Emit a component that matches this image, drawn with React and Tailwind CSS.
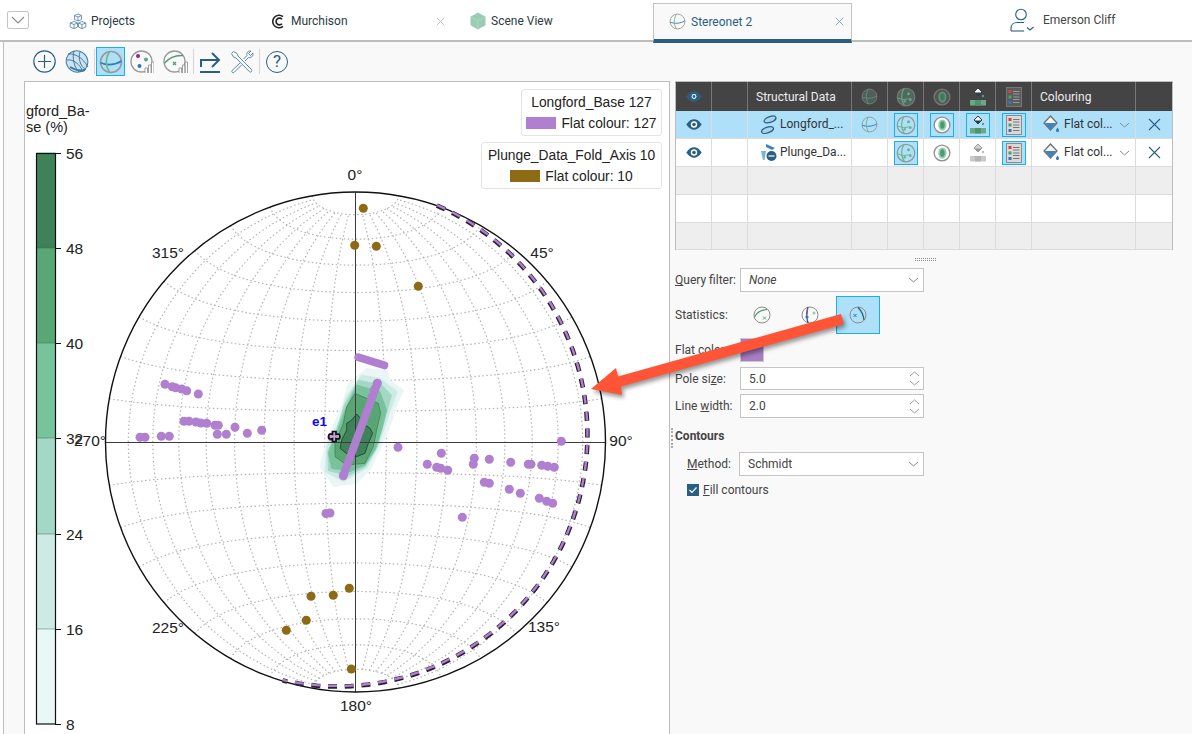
import React from 'react'

const CX = 355.5
const CY = 442
const R = 250
const rad = (d) => (d * Math.PI) / 180

function proj(lat, lon) {
  const p = rad(lat)
  const l = rad(lon)
  const k = Math.sqrt(2 / (1 + Math.cos(p) * Math.cos(l)))
  const x = CX + (R / Math.SQRT2) * k * Math.cos(p) * Math.sin(l)
  const y = CY - (R / Math.SQRT2) * k * Math.sin(p)
  return `${x.toFixed(1)},${y.toFixed(1)}`
}

function range(from, to, step) {
  const out = []
  for (let v = from; v <= to; v += step) out.push(v)
  return out
}

const gridLines = [
  ...range(-80, 80, 10).filter((l) => l !== 0).map((lon) => range(-80, 80, 4).map((lat) => proj(lat, lon)).join(' ')),
  ...range(-80, 80, 10).filter((l) => l !== 0).map((lat) => range(-90, 90, 3).map((lon) => proj(lat, lon)).join(' ')),
]

function greatCircle(dip) {
  return range(19, 197, 2).map((a) => {
    const p = Math.atan(Math.tan(rad(dip)) * Math.cos(rad(a - 109)))
    const r = R * Math.SQRT2 * Math.sin((Math.PI / 2 - p) / 2)
    return `${(CX + r * Math.sin(rad(a))).toFixed(1)},${(CY - r * Math.cos(rad(a))).toFixed(1)}`
  }).join(' ')
}

const purpleDots = [
  [165, 384.3], [172.3, 386.7], [175.7, 387.7], [181.7, 389], [186.7, 390.7], [198.3, 394],
  [184, 421.3], [189, 421.3], [196, 422], [200.7, 423], [206.7, 423.3], [215, 425.3], [218.3, 425.3],
  [217.3, 434.3], [226.3, 434.3], [235, 427.3], [247.3, 433.3], [261.7, 430.3],
  [140, 437.3], [145, 437.3], [161.3, 436.3], [169.3, 436.3],
  [561.3, 441.3], [398, 447.3], [441.3, 453.3], [427.3, 464.3], [436.7, 467.3], [440.7, 468.3], [447.7, 470.3],
  [474.3, 458.3], [473.3, 464.3], [489.3, 459.3], [510.7, 462.3], [528.3, 464.3], [531, 464.3],
  [541.7, 465.3], [547.7, 466.3], [554.3, 467.3], [484.3, 482.3], [489.3, 483.3], [509.3, 489.3],
  [520.3, 493.3], [539.3, 498.3], [546.7, 501.3], [552.7, 503.3], [462.3, 517.3], [326, 513.5], [330, 513],
  [332, 437], [377.3, 383.3], [374.3, 390], [372, 397], [343.3, 475.7],
]

const brownDots = [
  [363.3, 208.3], [354.7, 245.3], [376.3, 246.3], [418.3, 286.3],
  [349.3, 588.3], [333.3, 595.3], [311, 596.3], [306.3, 620.3], [286.3, 630.3], [351.3, 669],
]

// contour outlines, traced in a 3x crop whose corner is at 290,340
const contours = [
  { fill: '#e9f6f5', pts: [[230, 85], [290, 90], [300, 120], [340, 150], [320, 200], [300, 260], [270, 330], [240, 390], [200, 430], [130, 440], [90, 380], [110, 300], [150, 210], [175, 130]] },
  { fill: '#cdebe4', pts: [[215, 105], [270, 115], [322, 155], [295, 230], [265, 320], [230, 385], [160, 425], [105, 395], [110, 320], [148, 240], [168, 170]] },
  { fill: '#a2d8c5', pts: [[205, 120], [275, 135], [305, 165], [288, 225], [262, 320], [226, 380], [175, 408], [115, 392], [113, 335], [138, 275], [163, 195]] },
  { fill: '#78c29c', pts: [[200, 135], [270, 155], [290, 210], [275, 270], [255, 330], [225, 375], [180, 395], [125, 385], [115, 340], [135, 290], [165, 210]] },
  { fill: '#59a673', pts: [[195, 160], [265, 190], [272, 220], [260, 270], [250, 320], [225, 370], [170, 375], [135, 350], [135, 310], [160, 250], [170, 200]], line: '#3d7a55' },
  { fill: '#3f8159', pts: [[200, 222], [212, 235], [218, 250], [240, 265], [248, 280], [235, 310], [225, 340], [200, 350], [175, 345], [150, 325], [155, 300], [170, 270], [170, 250], [185, 240]], line: '#123524' },
]

const bands = [
  { y: 153, c: '#3f8159' }, { y: 248, c: '#5aa674' }, { y: 343, c: '#78c29c' },
  { y: 438, c: '#a2d8c5' }, { y: 534, c: '#cdebe4' }, { y: 629, c: '#eaf7f7' },
]
const ticks = [[56, 153], [48, 248], [40, 343], [32, 438], [24, 534], [16, 629], [8, 724]]
const degLabels = [
  ['0°', 355, 180], ['45°', 542, 258], ['90°', 621, 446], ['135°', 544, 632],
  ['180°', 356, 711], ['225°', 168, 633], ['270°', 90, 446], ['315°', 168, 258],
]

function StereoIcon({ size = 24, ring = '#9a9a9a', fill = 'none', blue = '#2f7fb0', green = '#6db58a', w = 1.5 }) {
  return (
    <svg width={size} height={size} viewBox="0 0 24 24" fill="none">
      <circle cx="12" cy="12" r="10.5" stroke={ring} strokeWidth={w} fill={fill} />
      <path d="M1.5 12.8C8 15.5 16 15 22.5 11" stroke={blue} strokeWidth={w} />
      <path d="M10.5 1.5C6.5 8 6.5 16 10.5 22.5" stroke={green} strokeWidth={w} />
    </svg>
  )
}

function DotsIcon({ dark }) {
  const g = dark ? '#6f9f87' : '#6db58a'
  return (
    <svg width="20" height="20" viewBox="0 0 24 24" fill="none">
      <circle cx="12" cy="12" r="10.5" stroke={dark ? '#777' : '#8f9a96'} strokeWidth="1.5" fill={dark ? '#4d6a5c' : 'none'} />
      <path d="M9.5 2C5.5 8 6 16 10 22" stroke={g} strokeWidth="1.5" />
      <path d="M2 13C7 15.5 11 15.5 15 14" stroke={g} strokeWidth="1.2" />
      <circle cx="15" cy="8" r="1.8" fill={g} />
      <circle cx="17" cy="15" r="1.8" fill={g} />
      <circle cx="10.5" cy="17" r="1.5" fill={g} />
    </svg>
  )
}

function ContourIcon({ dark }) {
  return (
    <svg width="18" height="18" viewBox="0 0 24 24" fill="none">
      <circle cx="12" cy="12" r="10.5" stroke={dark ? '#777' : '#8f8f8f'} strokeWidth="1.8" fill={dark ? '#555' : '#fff'} />
      <ellipse cx="12.5" cy="12" rx="5.5" ry="7.5" fill={dark ? '#5c9278' : '#8fcdb0'} />
      <ellipse cx="12.5" cy="12" rx="3" ry="5" fill={dark ? '#3f7a5d' : '#4c9a70'} />
    </svg>
  )
}

function FillIcon({ gray }) {
  const top = gray ? '#999' : '#2e3f46'
  return (
    <svg width="18" height="20" viewBox="0 0 18 20" fill="none">
      <path d="M9 1L13 5L9 9L5 5Z" fill={gray ? '#d4d4d4' : '#f3f3f3'} stroke={top} strokeWidth="1" />
      <path d="M5.5 5.5L12.5 5.5L9 9Z" fill={top} />
      <circle cx="14" cy="9" r="1.2" fill={gray ? '#bbb' : '#5a9f7c'} />
      <rect x="1" y="13" width="16" height="5.5" fill={gray ? '#c9c9c9' : '#6aa886'} />
      <rect x="6" y="13" width="6" height="5.5" fill={gray ? '#b4b4b4' : '#4f9470'} />
    </svg>
  )
}

function ListIcon({ dark }) {
  return (
    <svg width="16" height="20" viewBox="0 0 16 20" fill="none">
      <rect x="0.5" y="0.5" width="15" height="19" fill={dark ? '#5b5b5b' : '#d9d9d9'} stroke={dark ? '#777' : '#8c8c8c'} />
      <rect x="2.5" y="3" width="3" height="3" fill="#d9403a" />
      <rect x="2.5" y="8.5" width="3" height="3" fill="#49a26c" />
      <rect x="2.5" y="14" width="3" height="3" fill="#2f79b8" />
      <path d="M7 4.5H13.5M7 7H13.5M7 10H13.5M7 12.5H13.5M7 15.5H13.5" stroke={dark ? '#999' : '#777'} />
    </svg>
  )
}

function BucketIcon() {
  return (
    <svg width="17" height="19" viewBox="0 0 17 19" fill="none">
      <path d="M7.5 1L14 8L7.5 15L1 8Z" fill="#f5f5f5" stroke="#6f6f6f" strokeWidth="1.3" />
      <path d="M1.6 8H13.4L7.5 14.4Z" fill="#3d86bd" />
      <path d="M14.5 12.5C15.5 14 16 14.6 16 15.4A1.5 1.5 0 0 1 13 15.4C13 14.6 13.6 14 14.5 12.5Z" fill="#2f79b8" />
    </svg>
  )
}

function EyeIcon({ header }) {
  return (
    <svg width="16" height="11" viewBox="0 0 16 11">
      <path d="M0.3 5.5C3 1.5 5.5 0.3 8 0.3S13 1.5 15.7 5.5C13 9.5 10.5 10.7 8 10.7S3 9.5 0.3 5.5Z" fill="#2a5f85" />
      <circle cx="8" cy="5.5" r={header ? 2.4 : 3.2} fill="#fff" />
      <circle cx="8" cy="5.5" r={header ? 1.4 : 1.8} fill="#2a5f85" />
    </svg>
  )
}

function Cross({ size = 13, color = '#2a5f85', w = 1.1 }) {
  return (
    <svg width={size} height={size} viewBox="0 0 13 13" fill="none">
      <path d="M1 1L12 12M12 1L1 12" stroke={color} strokeWidth={w} />
    </svg>
  )
}

function Chevron({ color = '#8a8a8a' }) {
  return (
    <svg width="11" height="6" viewBox="0 0 11 6" fill="none">
      <path d="M1 1L5.5 5L10 1" stroke={color} strokeWidth="1" />
    </svg>
  )
}

function Boxed({ on, children }) {
  return (
    <div className={`w-[24px] h-[24px] flex items-center justify-center ${on ? 'border border-[#18aef0] bg-[#aee0fa]' : ''}`}>
      {children}
    </div>
  )
}

function TopBar() {
  return (
    <div className="h-[42px] flex border-b-2 border-[#bdbdbd] bg-white text-[12px] text-[#2b3a44]">
      <div className="w-[52px] pt-[11px] pl-[7px]">
        <div className="w-[22px] h-[18px] border border-[#c4c4c4] rounded-[2px] flex items-center justify-center">
          <svg width="14" height="8" viewBox="0 0 14 8" fill="none"><path d="M1 1L7 7L13 1" stroke="#8c8c8c" strokeWidth="1.1" /></svg>
        </div>
      </div>
      <div className="w-[200px] pl-[17px] pt-[2px] flex items-center gap-[4px]">
        <svg width="18" height="17" viewBox="0 0 18 17" fill="none" stroke="#5d8cae" strokeWidth="0.9">
          <path d="M9 1L12.5 2.5V6.5L9 8L5.5 6.5V2.5ZM5.5 2.5L9 4L12.5 2.5M9 4V8" />
          <path d="M5 8.5L8.5 10V14L5 15.7L1.2 14V10ZM1.2 10L5 11.5L8.5 10M5 11.5V15.7" />
          <path d="M13 8.5L16.8 10V14L13 15.7L9.5 14V10ZM9.5 10L13 11.5L16.8 10M13 11.5V15.7" />
        </svg>
        <span>Projects</span>
      </div>
      <div className="w-[200px] pl-[19px] pr-[7px] pt-[2px] flex items-center">
        <svg width="15" height="15" viewBox="0 0 15 15" fill="none" stroke="#222" strokeWidth="1.6">
          <path d="M12 2.6A6.3 6.3 0 1 0 12 12.4" />
          <path d="M11 5.2A3.4 3.4 0 1 0 11 9.8" />
        </svg>
        <span className="ml-[5px] flex-1">Murchison</span>
        <Cross size={9} color="#b5b5b5" w={1.2} />
      </div>
      <div className="w-[201px] pl-[17px] pt-[2px] flex items-center gap-[4px]">
        <svg width="18" height="18" viewBox="0 0 18 18">
          <path d="M9 0.5L16.5 4.7V13.3L9 17.5L1.5 13.3V4.7Z" fill="#9accb4" />
          <path d="M9 9L16.5 4.7M9 9L1.5 4.7M9 9V17.5" stroke="#b4dac8" strokeWidth="0.8" />
        </svg>
        <span>Scene View</span>
      </div>
      <div className="w-[199px] h-[40px] mt-[3px] pl-[15px] pr-[7px] flex items-center bg-[#f9f9f9] border-x border-t border-[#c4c4c4] border-b-[4px] border-b-[#2a5f85] text-[#2a5f85]">
        <StereoIcon size={17} w={1.3} />
        <span className="ml-[5px] flex-1">Stereonet 2</span>
        <Cross size={9} color="#5b87a5" w={1} />
      </div>
      <div className="ml-[158px] flex items-center gap-[9px] text-[#444]">
        <svg width="24" height="24" viewBox="0 0 24 24" fill="none" stroke="#2a5f85" strokeWidth="1.1">
          <circle cx="11" cy="6.5" r="5.3" />
          <path d="M1 23V20.5C1 16.5 4 14.5 7 14.5H14" />
          <path d="M1 23H14" />
          <path d="M17 19.5L20 22L23.5 19" />
        </svg>
        <span>Emerson Cliff</span>
      </div>
    </div>
  )
}

function Toolbar() {
  return (
    <div className="h-[39px] pl-[29px] flex items-center">
      <svg width="23" height="23" viewBox="0 0 23 23" fill="none" stroke="#2a5f85" strokeWidth="1.2">
        <circle cx="11.5" cy="11.5" r="10.7" />
        <path d="M11.5 5V18M5 11.5H18" />
      </svg>
      <svg className="ml-[9px]" width="25" height="25" viewBox="0 0 25 25" fill="none" stroke="#3b7ca8" strokeWidth="1">
        <ellipse cx="12" cy="12.5" rx="11" ry="10.5" fill="#cfe3ef" transform="rotate(35 12 12.5)" />
        <path d="M3 5C10 4 18 9 23 18M2 11C8 10 15 15 18 23M9 2C7 9 9 18 14 23M15 3C13 9 15 17 21 21" />
        <path d="M5 18C10 21 16 22 20 21" strokeWidth="2" />
      </svg>
      <div className="ml-[4px] w-px h-[25px] bg-[#d4d4d4]" />
      <div className="ml-[1px] w-[29px] h-[29px] border border-[#18aef0] bg-[#aee0fa] flex items-center justify-center">
        <StereoIcon size={24} w={1.6} />
      </div>
      <svg className="ml-[5px]" width="24" height="24" viewBox="0 0 24 24" fill="none">
        <circle cx="11.5" cy="11.5" r="10.5" stroke="#9a9a9a" strokeWidth="1.3" />
        <circle cx="8" cy="6" r="2" fill="#8c2a8c" />
        <circle cx="16" cy="9.5" r="2" fill="#5da884" />
        <circle cx="9.5" cy="16" r="2" fill="#2f79b8" />
        <path d="M15 23V18H17.5V23M18.5 23V15H21V23M21.5 23V12H24V23" fill="#fff" stroke="#8c8c8c" strokeWidth="0.8" />
      </svg>
      <svg className="ml-[9px]" width="25" height="24" viewBox="0 0 25 24" fill="none">
        <circle cx="11.5" cy="11.5" r="10.5" stroke="#9a9a9a" strokeWidth="1.3" />
        <path d="M1.5 13C6 8 13 5 20 5.5" stroke="#4f9d75" strokeWidth="1.5" />
        <path d="M10 12L13 15M13 12L10 15" stroke="#4f9d75" strokeWidth="1.3" />
        <path d="M16 23V18H18.5V23M19.5 23V15H22V23M22 23V12H24.5V23" fill="#fff" stroke="#8c8c8c" strokeWidth="0.8" />
      </svg>
      <div className="ml-[5px] w-px h-[25px] bg-[#d4d4d4]" />
      <svg className="ml-[5px]" width="22" height="22" viewBox="0 0 22 22" fill="none" stroke="#2a5f85" strokeWidth="2">
        <path d="M1 21H21" />
        <path d="M2 16V9H19" />
        <path d="M13 2L20 9L13 16" />
      </svg>
      <svg className="ml-[9px]" width="24" height="24" viewBox="0 0 24 24" fill="none" stroke="#5d8cae" strokeWidth="1">
        <path d="M1.5 3.5L3.5 1.5L7 3.5L8 6L21.5 19.5C22.5 21 21 23 19.5 21.8L6 8L3.5 7Z" />
        <path d="M13.5 9L17 5.5C16 3 18 0.5 21 1L18.5 3.5L20.5 5.5L23 3C23.5 6 21 8.5 18.5 7.5L15 11" />
        <path d="M10 13L2 20.5C1 22 3 23.5 4 22.5L11.5 15" />
      </svg>
      <div className="ml-[5px] w-px h-[25px] bg-[#d4d4d4]" />
      <div className="ml-[6px] w-[22px] h-[22px] rounded-full border border-[#2a5f85] text-[#2a5f85] text-[17px] leading-none flex items-center justify-center">?</div>
    </div>
  )
}

function Chart() {
  return (
    <div className="relative w-[646px] h-[660px] bg-white border border-[#bdbdbd] overflow-hidden shrink-0">
      <svg className="absolute left-[-1px] top-[-1px] font-['Liberation_Sans',Arial,sans-serif]" width="646" height="653" viewBox="24 81 646 653" fill="none">
        <text x="26" y="116" fontSize="14.5" fill="#222">gford_Ba-</text>
        <text x="26" y="132" fontSize="14.5" fill="#222">se (%)</text>
        {bands.map((b) => (
          <g key={b.y}>
            <rect x="36.5" y={b.y} width="19" height="96" fill={b.c} />
            <path d={`M36.5 ${b.y}H55.5`} stroke="#2e6b4a" strokeOpacity="0.45" />
          </g>
        ))}
        <rect x="36.5" y="153.5" width="19" height="570.5" stroke="#111" strokeWidth="1.2" />
        {ticks.map(([v, y]) => (
          <g key={v}>
            <path d={`M55 ${y + 0.5}H61`} stroke="#111" />
            <text x="66" y={y + 5.5} fontSize="15.5" fill="#222">{v}</text>
          </g>
        ))}

        {gridLines.map((pts, i) => (
          <polyline key={i} points={pts} stroke="#b4b4b4" strokeWidth="1.2" strokeDasharray="1.5 2.5" />
        ))}
        {contours.map((c) => (
          <polygon
            key={c.fill}
            points={c.pts.map(([x, y]) => `${290 + x / 3},${340 + y / 3}`).join(' ')}
            fill={c.fill}
            stroke={c.line || c.fill}
            strokeWidth="0.7"
            strokeLinejoin="round"
          />
        ))}
        <path d={`M${CX} ${CY - R}V${CY + R}M${CX - R} ${CY + 0.5}H${CX + R}`} stroke="#3c3c3c" strokeWidth="1" />
        <circle cx={CX} cy={CY} r={R} stroke="#111" strokeWidth="1.4" />

        <polyline points={greatCircle(8.5)} stroke="#2a2030" strokeWidth="4.6" strokeDasharray="9 7.7" />
        <polyline points={greatCircle(8.5)} stroke="#b07fd0" strokeWidth="2.4" strokeDasharray="9 7.7" transform="translate(0 -0.6)" />

        <path d="M358.3 357.3L384.3 365.3" stroke="#b07fd0" strokeWidth="8" strokeLinecap="round" />
        <path d="M377.3 383.3L343.3 475.7" stroke="#b07fd0" strokeWidth="8" strokeLinecap="round" />
        {purpleDots.map(([x, y], i) => <circle key={i} cx={x} cy={y} r="4.5" fill="#b07fd0" />)}
        {brownDots.map(([x, y], i) => <circle key={i} cx={x} cy={y} r="4.5" fill="#8f6a16" />)}

        <path
          d="M332.5 431.5h3.5v3l2-.5c2.5 0 2.5 5 0 5l-2-.5v3h-3.5v-3l-2 .5c-2.5 0-2.5-5 0-5l2 .5z"
          fill="#c8a4dc"
          stroke="#111"
          strokeWidth="1.7"
        />
        <text x="312" y="426" fontSize="13.5" fontWeight="700" fill="#0b0bf0">e1</text>

        {degLabels.map(([t, x, y]) => (
          <text key={t} x={x} y={y} fontSize="15.5" textAnchor="middle" fill="#222">{t}</text>
        ))}
      </svg>
      <div className="absolute right-[7px] top-[7px] flex flex-col items-end gap-[6px] font-['Liberation_Sans',Arial,sans-serif] text-[13.8px] text-[#222]">
        <Legend width="w-[141px]" title="Longford_Base 127" color="bg-[#b07fd0]" label="Flat colour: 127" />
        <Legend width="w-[181px]" title="Plunge_Data_Fold_Axis 10" color="bg-[#8f6a16]" label="Flat colour: 10" />
      </div>
    </div>
  )
}

function Legend({ width, title, color, label }) {
  return (
    <div className={`${width} h-[47px] bg-white border border-[#e4e4e4] rounded-[3px] flex flex-col items-center justify-center leading-[21px]`}>
      <div>{title}</div>
      <div className="flex items-center gap-[5px]">
        <span className={`w-[30px] h-[12px] ${color}`} />
        <span>{label}</span>
      </div>
    </div>
  )
}

const gridCols = 'grid grid-cols-[36px_36px_104px_36px_36px_36px_36px_36px_104px_37px]'

function Cell({ children, last, className = '' }) {
  return (
    <div className={`flex items-center justify-center min-w-0 ${last ? '' : 'border-r border-[#dcdcdc]'} ${className}`}>
      {children}
    </div>
  )
}

function DataRow({ name, icon, selected, first, fill, contour }) {
  return (
    <div className={`${gridCols} h-[28px] border-b border-[#dcdcdc] ${selected ? 'bg-[#aee0fa]' : 'bg-white'}`}>
      <Cell><EyeIcon /></Cell>
      <Cell />
      <Cell className="!justify-start pl-[12px] gap-[3px] text-[#333]">{icon}<span className="-mt-[2px]">{name}</span></Cell>
      <Cell>{first && <StereoIcon size={17} w={1.4} />}</Cell>
      <Cell><Boxed on><DotsIcon /></Boxed></Cell>
      <Cell><Boxed on={contour}><ContourIcon /></Boxed></Cell>
      <Cell><Boxed on={fill}><FillIcon gray={!fill} /></Boxed></Cell>
      <Cell><Boxed on><ListIcon /></Boxed></Cell>
      <Cell className="!justify-start pl-[11px] text-[#333]">
        <BucketIcon />
        <span className="ml-[4px] flex-1 -mt-[2px]">Flat col...</span>
        <span className="mr-[5px]"><Chevron /></span>
      </Cell>
      <Cell last><Cross size={13} /></Cell>
    </div>
  )
}

function EmptyRow({ gray, h }) {
  return (
    <div className={`${gridCols} ${h} border-b border-[#dcdcdc] ${gray ? 'bg-[#eeeeee]' : 'bg-white'}`}>
      {range(0, 9, 1).map((i) => <Cell key={i} last={i === 9} />)}
    </div>
  )
}

function DataTable() {
  return (
    <div className="w-[498px] border-x border-t border-[#bdbdbd] text-[12px]">
      <div className={`${gridCols} h-[29px] bg-[#444444] text-[#eeeeee]`}>
        <Cell className="!border-[#777]"><EyeIcon header /></Cell>
        <Cell className="!border-[#777]" />
        <Cell className="!border-[#777] !justify-start pl-[8px]">Structural Data</Cell>
        <Cell className="!border-[#777]"><StereoIcon size={17} ring="#777" fill="#4f5f58" blue="#5f9079" green="#5f9079" w={1.3} /></Cell>
        <Cell className="!border-[#777]"><DotsIcon dark /></Cell>
        <Cell className="!border-[#777]"><ContourIcon dark /></Cell>
        <Cell className="!border-[#777]"><FillIcon /></Cell>
        <Cell className="!border-[#777]"><ListIcon dark /></Cell>
        <Cell className="!border-[#777] !justify-start pl-[8px]">Colouring</Cell>
        <Cell last />
      </div>
      <DataRow
        selected
        first
        fill
        contour
        name="Longford_..."
        icon={
          <svg width="17" height="20" viewBox="0 0 17 20" fill="#a8d4ea" stroke="#2a5f85" strokeWidth="1.3">
            <ellipse cx="10" cy="4.5" rx="6.2" ry="2.8" transform="rotate(-20 10 4.5)" />
            <ellipse cx="7.5" cy="15" rx="6.2" ry="2.8" transform="rotate(-20 7.5 15)" />
          </svg>
        }
      />
      <DataRow
        name="Plunge_Da..."
        icon={
          <svg width="17" height="19" viewBox="0 0 17 19">
            <path d="M6 1L15 5L12 7L6 4Z" fill="#3b86b8" />
            <path d="M1 8H6L4.5 17H3Z" fill="#7ab3d6" />
            <circle cx="11.5" cy="13" r="5" fill="#2a5f85" />
            <path d="M8.5 13H14.5" stroke="#fff" strokeWidth="1.2" />
          </svg>
        }
      />
      <EmptyRow gray h="h-[28px]" />
      <EmptyRow h="h-[28px]" />
      <EmptyRow gray h="h-[27px]" />
    </div>
  )
}

function Field({ children, className = '' }) {
  return (
    <div className={`bg-white border border-[#c4c4c4] flex items-center justify-between text-[#444] ${className}`}>
      {children}
    </div>
  )
}

function SpinField({ value, h }) {
  return (
    <Field className={`w-[184px] ${h} pl-[8px] pr-[3px]`}>
      <span>{value}</span>
      <span className="flex flex-col gap-[3px]">
        <span className="rotate-180 flex"><Chevron color="#9a9a9a" /></span>
        <Chevron color="#9a9a9a" />
      </span>
    </Field>
  )
}

function Form() {
  return (
    <div className="text-[12px] text-[#444]">
      <div className="h-[18px] flex flex-col items-end justify-center pr-[237px] gap-[1px]">
        <div className="w-[21px] border-t border-dotted border-[#888]" />
        <div className="w-[21px] border-t border-dotted border-[#888]" />
      </div>
      <div className="flex items-center h-[24px]">
        <span className="w-[65px]"><u>Q</u>uery filter:</span>
        <Field className="w-[184px] h-[24px] pl-[8px] pr-[4px]">
          <i>None</i>
          <Chevron />
        </Field>
      </div>
      <div className="flex items-center h-[38px] mt-[4px]">
        <span className="w-[65px]">Statistics:</span>
        <div className="w-[48px] flex justify-center -ml-[2px]">
          <svg width="18" height="18" viewBox="0 0 18 18" fill="none">
            <circle cx="9" cy="9" r="8" stroke="#8c8c8c" />
            <path d="M1.5 11C4 6 8 4 14 3.5" stroke="#4f9d75" strokeWidth="1.2" />
            <path d="M10 10.5L13 13.5M13 10.5L10 13.5" stroke="#5da884" />
          </svg>
        </div>
        <div className="w-[48px] flex justify-center">
          <svg width="18" height="18" viewBox="0 0 18 18" fill="none">
            <circle cx="9" cy="9" r="8" stroke="#8c8c8c" />
            <path d="M7 1C5.5 6 5.5 12 7 17" stroke="#2a5f85" strokeWidth="1.3" />
            <path d="M6.5 3L6 8" stroke="#8c4aa8" strokeWidth="1.3" />
            <circle cx="6" cy="11" r="1.6" fill="#2f79b8" />
            <circle cx="13" cy="7" r="1.5" fill="#8ccfb0" />
          </svg>
        </div>
        <div className="ml-[2px] w-[44px] h-[38px] bg-[#aee0fa] border border-[#18aef0] flex items-center justify-center">
          <svg width="18" height="18" viewBox="0 0 18 18" fill="none">
            <circle cx="9" cy="9" r="8" stroke="#8c8c8c" />
            <path d="M9 1.5C12.5 5 14.5 9 15 14" stroke="#2a5f85" strokeWidth="1.3" />
            <path d="M4.5 8L7.5 11M7.5 8L4.5 11" stroke="#2f79b8" />
          </svg>
        </div>
      </div>
      <div className="flex items-center h-[24px] mt-[4px]">
        <span className="w-[65px]">Flat colour:</span>
        <div className="w-[24px] h-[24px] bg-[#a97cc4] border border-[#c9c9c9]" />
      </div>
      <div className="flex items-center h-[23px] mt-[5px]">
        <span className="w-[65px]">Pole si<u>z</u>e:</span>
        <SpinField value="5.0" h="h-[23px]" />
      </div>
      <div className="flex items-center h-[24px] mt-[4px]">
        <span className="w-[65px]">Line <u>w</u>idth:</span>
        <SpinField value="2.0" h="h-[24px]" />
      </div>
      <div className="relative h-[18px] mt-[9px] font-bold leading-[18px]">
        <div className="absolute -left-[4px] top-[1px] h-[20px] border-l-2 border-dotted border-[#aaa]" />
        Contours
      </div>
      <div className="flex items-center h-[24px] mt-[7px] pl-[12px]">
        <span className="w-[52px]"><u>M</u>ethod:</span>
        <Field className="w-[185px] h-[24px] pl-[8px] pr-[4px]">
          <span>Schmidt</span>
          <Chevron />
        </Field>
      </div>
      <div className="flex items-center h-[14px] mt-[7px] pl-[12px] gap-[4px]">
        <span className="w-[12px] h-[12px] bg-[#2a5f85] flex items-center justify-center">
          <svg width="10" height="10" viewBox="0 0 10 10" fill="none"><path d="M1.5 5L4 7.5L8.5 2.5" stroke="#fff" strokeWidth="1.2" /></svg>
        </span>
        <span><u>F</u>ill contours</span>
      </div>
    </div>
  )
}

export default function App() {
  return (
    <div className="relative w-[1192px] h-[734px] overflow-hidden bg-white font-['Roboto',sans-serif]">
      <TopBar />
      <div className="ml-[3px] h-[692px] border-l border-[#bdbdbd] bg-[#f9f9f9]">
        <Toolbar />
        <div className="flex pl-[20px]">
          <Chart />
          <div className="ml-[5px] min-w-0">
            <DataTable />
            <Form />
          </div>
        </div>
      </div>
      {/* annotation arrow over the form */}
      <svg className="absolute left-0 top-0 drop-shadow-[2px_3px_2px_rgba(0,0,0,0.4)] pointer-events-none" width="1192" height="734" viewBox="0 0 1192 734">
        <polygon points="591,389 616,368 618,376.5 841,314 844,324 621,386.5 622,395" fill="#ff5436" />
      </svg>
    </div>
  )
}
